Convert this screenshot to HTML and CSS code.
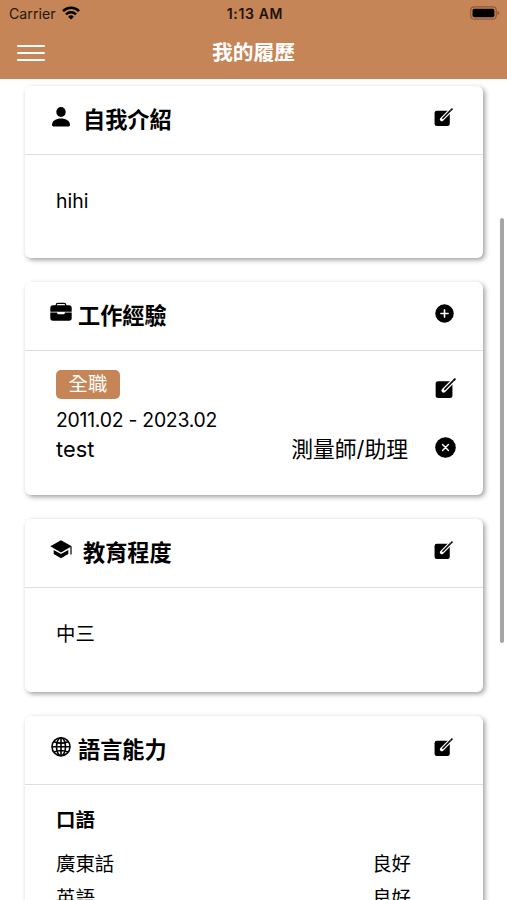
FILE: index.html
```html
<!DOCTYPE html>
<html lang="zh-Hant">
<head>
<meta charset="utf-8">
<meta name="viewport" content="width=device-width, initial-scale=1">
<title>我的履歷</title>
<link rel="stylesheet" href="styles.css">
</head>
<body>
<svg class="defs" width="0" height="0" aria-hidden="true">
  <symbol id="edit" viewBox="0 0 20 20">
    <rect x=".6" y="3" width="16" height="16" rx="2.4"/>
    <path d="M8.200 11.900 19 1" stroke="#fff" stroke-width="4" stroke-linecap="round"/>
    <path d="M8.800 11.300 17.500 2.500" stroke="#000" stroke-width="1.500"/>
    <path d="m18.100 1.900.8-.8" stroke="#000" stroke-width="1.800" stroke-linecap="round"/>
  </symbol>
</svg>
<header class="top">
  <div class="status">
    <div class="carrier">Carrier
      <svg class="wifi" viewBox="0 0 18 14" fill="none" stroke="#000" stroke-width="2.5">
        <path d="M1 5.1a11.4 11.4 0 0 1 16 0"/>
        <path d="M4 8.4a7.1 7.1 0 0 1 10 0"/>
        <path d="M9 13.6 6.1 10.7a4.1 4.1 0 0 1 5.8 0z" fill="#000" stroke="none"/>
      </svg>
    </div>
    <div class="time">1:13 AM</div>
    <svg class="battery" viewBox="0 0 31 14">
      <rect x=".7" y=".7" width="26.4" height="12.6" rx="3.6" fill="none" stroke="#8b5a38" stroke-width="1.2"/>
      <rect x="2.6" y="2.5" width="22.6" height="9" rx="1.8"/>
      <path d="M28.4 4.7q2 .8 2 2.3t-2 2.3z" fill="#8b5a38"/>
    </svg>
  </div>
  <div class="nav">
    <div class="menu"><i></i><i></i><i></i></div>
    <h1>我的履歷</h1>
  </div>
</header>
<main class="content">
  <section class="card">
    <div class="head">
      <svg class="icon" viewBox="0 0 22 22"><ellipse cx="11" cy="6" rx="4.7" ry="5"/><path d="M2 19c0-4.300 4-6.600 9-6.600s9 2.300 9 6.600q0 1.400-1.400 1.400H3.400Q2 20.400 2 19z"/></svg>
      <h2 class="wide">自我介紹</h2>
      <svg class="edit"><use href="#edit"/></svg>
    </div>
    <div class="body single">hihi</div>
  </section>

  <section class="card">
    <div class="head">
      <svg class="icon" viewBox="0 0 22 22"><path d="M6.200 4V3.200Q6.200 1.400 8 1.400h6q1.800 0 1.800 1.800V4" fill="none" stroke="#000" stroke-width="1.300"/><path d="M3 3.300h16q2.700 0 2.700 2.700v3.700H.3V6Q.3 3.300 3 3.300z"/><path d="M.3 10.500h6.900v.6q0 1.200 1.200 1.200h5.200q1.200 0 1.200-1.200v-.6h6.900v5.600q0 2.700-2.700 2.700H3Q.3 18.800.3 16.100z"/></svg>
      <h2>工作經驗</h2>
      <svg class="round" viewBox="0 0 20 20"><circle cx="10" cy="10" r="9.700"/><path d="M10 6.200v7.600M6.200 10h7.600" stroke="#fff" stroke-width="1.700" stroke-linecap="round"/></svg>
    </div>
    <div class="body job">
      <div class="details">
        <span class="tag">全職</span>
        <div class="dates">2011.02 - 2023.02</div>
        <div class="role"><span>test</span><span>測量師/助理</span></div>
      </div>
      <div class="actions">
        <svg class="edit big"><use href="#edit"/></svg>
        <svg class="round big" viewBox="0 0 20 20"><circle cx="10" cy="10" r="9.800"/><path d="m7.200 7.200 5.600 5.600m0-5.600-5.600 5.600" stroke="#fff" stroke-width="1.400" stroke-linecap="round"/></svg>
      </div>
    </div>
  </section>

  <section class="card">
    <div class="head">
      <svg class="icon" viewBox="0 0 22 22"><path d="M.3 7.300 11 1.200l10.700 6.100L11 13.400z"/><path d="M3.700 11v4.100l7.300 4.100 7.300-4.100V11L11 15.100z"/><path d="M21 7.400v8.100" stroke="#000" stroke-width="1.200"/></svg>
      <h2 class="wide">教育程度</h2>
      <svg class="edit"><use href="#edit"/></svg>
    </div>
    <div class="body single last">中三</div>
  </section>

  <section class="card">
    <div class="head">
      <svg class="icon" viewBox="0 0 22 22" fill="none" stroke="#000" stroke-width="1.600"><circle cx="11" cy="10.800" r="9"/><ellipse cx="11" cy="10.800" rx="4.500" ry="9"/><path d="M11 1.800v18M2 10.800h18M3.900 5.700q7.100 2.900 14.200 0M3.900 15.900q7.100-2.900 14.200 0"/></svg>
      <h2>語言能力</h2>
      <svg class="edit"><use href="#edit"/></svg>
    </div>
    <div class="body languages">
      <h3>口語</h3>
      <div class="row"><span>廣東話</span><span>良好</span></div>
      <div class="row"><span>英語</span><span>良好</span></div>
    </div>
  </section>
  <div class="scrollbar"></div>
</main>
</body>
</html>
```

FILE: styles.css
```css
* { box-sizing: border-box; }
body {
  margin: 0;
  height: 900px;
  overflow: hidden;
  display: flex;
  flex-direction: column;
  background: #fff;
  color: #000;
  font-family: Inter, "Noto Sans CJK TC", sans-serif;
  font-size: 19.4px;
}
h1, h2, h3 { margin: 0; font-weight: 600; }
svg { display: block; flex: none; }
.defs { position: absolute; }

.top { flex: none; height: 79px; background: #c68556; }
.status {
  height: 27px;
  padding: 0 7px 0 9px;
  display: grid;
  grid-template-columns: 1fr auto 1fr;
  align-items: center;
  font-size: 14.2px;
}
.carrier { display: flex; align-items: center; gap: 6px; color: #24170e; }
.wifi { width: 18px; height: 14px; margin-top: -1px; }
.time { font-weight: 600; font-size: 14px; letter-spacing: .65px; margin-right: -1px; color: #1d120a; }
.battery { width: 30px; height: 14px; justify-self: end; margin-top: -1px; }
.nav {
  height: 52px;
  padding: 0 17px;
  display: grid;
  grid-template-columns: 1fr auto 1fr;
  align-items: center;
}
.menu { display: flex; flex-direction: column; gap: 5px; width: 28px; }
.menu i { height: 2.3px; border-radius: 1px; background: #fff; }
h1 { color: #fff; font-size: 20.8px; line-height: 30px; }

.content {
  position: relative;
  flex: 1;
  min-height: 0;
  overflow: hidden;
  padding: 7px 24px 0 25px;
  display: flex;
  flex-direction: column;
  gap: 24px;
}
.card {
  flex: none;
  border-radius: 6px;
  background: #fff;
  box-shadow: 2px 2px 5px rgba(0, 0, 0, .38);
}
.head {
  height: 69px;
  padding: 0 29px 0 25px;
  display: flex;
  align-items: center;
  border-bottom: 1px solid #dedede;
}
.icon { width: 22px; height: 22px; margin-top: -6px; }
h2 { flex: 1; margin-left: 6px; font-size: 22.2px; line-height: 32px; }
h2.wide { margin-left: 11px; }
.edit { width: 19px; height: 19px; margin: -6px 1px 0 0; }
.round { width: 19px; height: 19px; margin: -6px 0 0; }
.body { padding: 0 31px; }
.single { height: 103px; padding-top: 31px; line-height: 30px; }
.single.last { height: 104px; }
.job {
  height: 144px;
  padding: 19px 27px 0 31px;
  display: flex;
}
.details { flex: 1; }
.tag {
  display: block;
  width: 64px;
  height: 29px;
  border-radius: 5px;
  background: #c68556;
  color: #fff;
  text-align: center;
  line-height: 29px;
}
.dates { margin-top: 7px; line-height: 29px; letter-spacing: -.25px; }
.role { display: flex; justify-content: space-between; font-size: 21.8px; line-height: 29px; }
.actions { width: 48px; display: flex; flex-direction: column; align-items: flex-end; padding-top: 8px; gap: 38px; }
.edit.big { width: 21px; height: 21px; margin: 0; }
.round.big { width: 21px; height: 21px; margin: 0; }
.languages { height: 230px; padding: 20px 72px 0 31px; }
h3 { font-size: 19.4px; line-height: 30px; }
.row { display: flex; justify-content: space-between; height: 34px; line-height: 30px; }
h3 + .row { margin-top: 14px; }
.scrollbar {
  position: absolute;
  top: 139px;
  right: 3px;
  width: 4px;
  height: 425px;
  border-radius: 2px;
  background: #a5a5a5;
}
```
